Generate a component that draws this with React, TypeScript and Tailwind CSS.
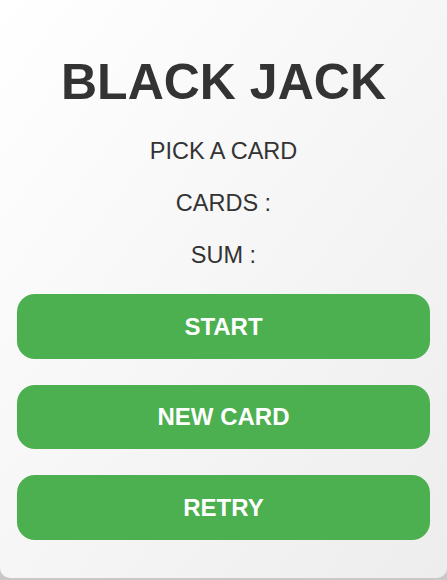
import React from 'react';

const buttons = ['START', 'NEW CARD', 'RETRY'];

export default function App() {
  return (
    <div className="w-[447px] h-[580px] bg-[#c8c8c8] overflow-hidden" style={{ fontFamily: '"Liberation Sans", Arial, sans-serif' }}>
      <div className="h-[578px] w-full rounded-b-[10px] bg-gradient-to-br from-[#ffffff] to-[#ededed] flex flex-col items-center pt-[57px] px-[17px]">
        <h1 className="text-[50px] leading-[50px] font-bold text-[#333333]">BLACK JACK</h1>

        <div className="mt-[18px] flex flex-col items-center text-[23.5px] leading-[52px] text-[#333333]">
          <p>PICK A CARD</p>
          <p>CARDS :</p>
          <p>SUM :</p>
        </div>

        <div className="mt-[13px] w-full flex flex-col gap-[26px]">
          {buttons.map((label) => (
            <button
              key={label}
              className="w-full h-[64.5px] rounded-[18px] bg-[#4caf50] text-white text-[24px] font-bold pt-px"
            >
              {label}
            </button>
          ))}
        </div>
      </div>
    </div>
  );
}
